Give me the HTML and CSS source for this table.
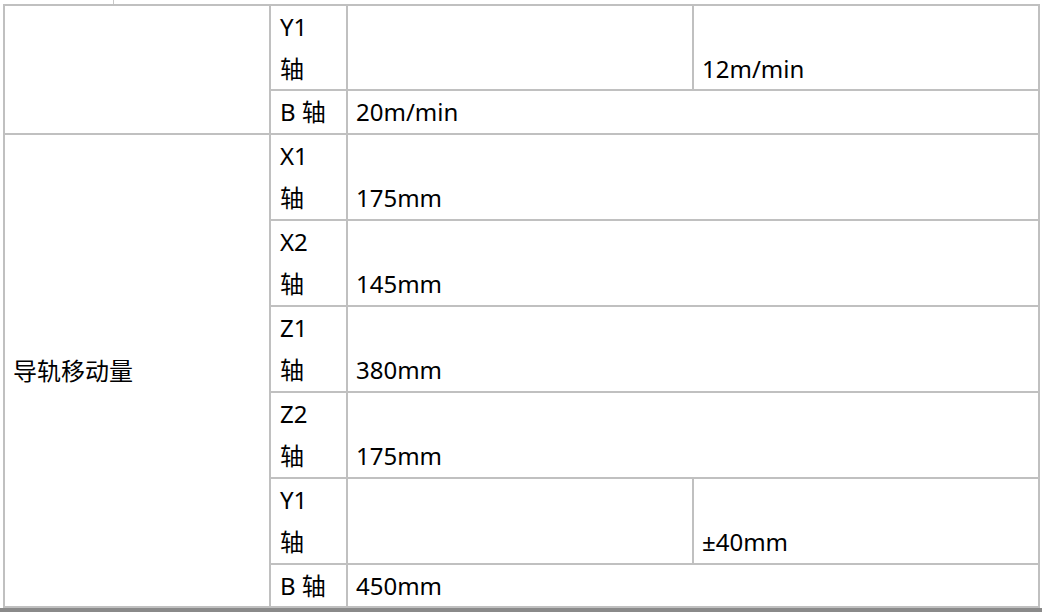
FILE: index.html
```html
<!DOCTYPE html>
<html lang="zh-CN">
<head>
<meta charset="utf-8">
<title>导轨移动量</title>
<link rel="stylesheet" href="styles.css">
</head>
<body>
<div class="stub"><span class="stub-line"></span></div>
<table class="spec">
  <colgroup>
    <col class="c-name">
    <col class="c-axis">
    <col class="c-val">
    <col class="c-val">
  </colgroup>
  <tbody>
    <tr class="row-first">
      <td class="name" rowspan="2"></td>
      <td class="axis">Y1<br>轴</td>
      <td class="val"></td>
      <td class="val">12m/min</td>
    </tr>
    <tr>
      <td class="axis">B 轴</td>
      <td class="val" colspan="2">20m/min</td>
    </tr>
    <tr>
      <td class="name" rowspan="6">导轨移动量</td>
      <td class="axis">X1<br>轴</td>
      <td class="val" colspan="2">175mm</td>
    </tr>
    <tr>
      <td class="axis">X2<br>轴</td>
      <td class="val" colspan="2">145mm</td>
    </tr>
    <tr>
      <td class="axis">Z1<br>轴</td>
      <td class="val" colspan="2">380mm</td>
    </tr>
    <tr>
      <td class="axis">Z2<br>轴</td>
      <td class="val" colspan="2">175mm</td>
    </tr>
    <tr>
      <td class="axis">Y1<br>轴</td>
      <td class="val"></td>
      <td class="val">±40mm</td>
    </tr>
    <tr class="row-last">
      <td class="axis">B 轴</td>
      <td class="val" colspan="2">450mm</td>
    </tr>
  </tbody>
</table>
<div class="edge"></div>
</body>
</html>
```
FILE: styles.css
```css
html, body {
  margin: 0;
  padding: 0;
  background: #ffffff;
  overflow: hidden;
}
body {
  font-family: "Noto Sans", "Noto Sans CJK SC", sans-serif;
  font-size: 24px;
  color: #000000;
}
.stub {
  height: 4px;
}
.stub-line {
  display: block;
  width: 1px;
  height: 4px;
  margin-left: 113px;
  background: #c8c8c8;
}
.spec {
  margin-left: 3px;
  width: 1037px;
  table-layout: fixed;
  border-collapse: separate;
  border-spacing: 0;
  border-left: 2px solid #c0c0c0;
  border-top: 2px solid #c0c0c0;
}
.c-name { width: 266px; }
.c-axis { width: 77px; }
.c-val { width: 346px; }
.spec td {
  box-sizing: border-box;
  border-right: 2px solid #c0c0c0;
  border-bottom: 2px solid #c0c0c0;
  padding: 0 8px;
  line-height: 42px;
  white-space: nowrap;
}
.spec .row-first td {
  line-height: 41.5px;
}
.spec .row-last td {
  line-height: 41px;
}
.spec td.name {
  vertical-align: middle;
}
.spec td.axis {
  vertical-align: top;
  padding-left: 9px;
}
.spec td.val {
  vertical-align: bottom;
}
.edge {
  height: 4px;
  background: #8a8a8a;
}
```
